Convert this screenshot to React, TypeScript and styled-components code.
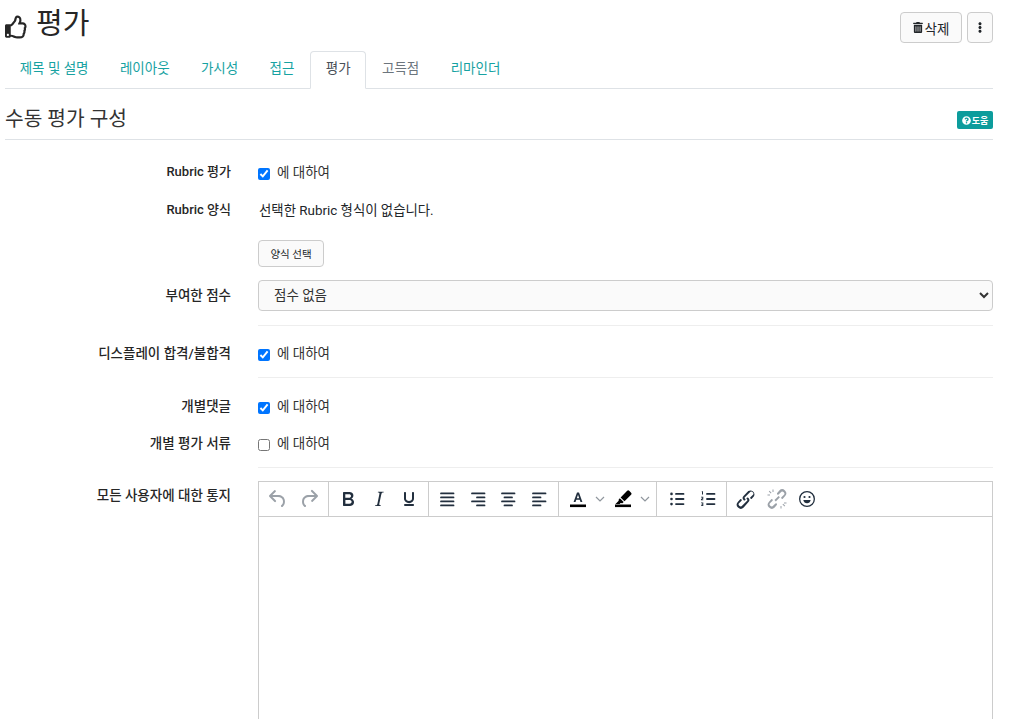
import React from "react";
import styled, { createGlobalStyle } from "styled-components";
import { FaRegThumbsUp, FaTrashAlt, FaEllipsisV, FaQuestionCircle } from "react-icons/fa";

const Global = createGlobalStyle`
  html, body { margin: 0; height: 100%; overflow: hidden; background: #fff; }
  body { font-family: Roboto, "Noto Sans CJK KR", sans-serif; font-size: 13px; color: #212529; }
`;
const Page = styled.div`padding: 0 34px 0 5px; height: 719px; overflow: hidden;`;
const Header = styled.header`display: flex; align-items: center; justify-content: space-between; height: 51px;`;
const Title = styled.h1`display: flex; align-items: center; gap: 8px; margin: 0; font-size: 29px; font-weight: 400; color: #262626; line-height: 51px; position: relative; top: -1px;
  svg { width: 23px; height: 24px; margin-top: 4px; }`;
const Actions = styled.div`display: flex; gap: 5px; margin-top: 4px;`;
const Btn = styled.button`display: inline-flex; align-items: center; justify-content: center; gap: 2px; height: ${p => p.$h || 31}px; width: ${p => p.$w}px; padding: 0; background: #fafafa; border: 1px solid #ccc; border-radius: 4px; color: #212529; font: inherit; font-size: ${p => p.$fs || 13}px;
  svg { width: 10px; height: 11px; }`;
const Tabs = styled.nav`display: flex; height: 37px; border-bottom: 1px solid #dee2e6;`;
const Tab = styled.a`display: flex; align-items: center; height: 38px; box-sizing: border-box; padding: 0 14.7px 7px; font-size: 13.5px; color: ${p => p.$gray ? "#6c757d" : p.$active ? "#495057" : "#17a2a2"}; border: 1px solid ${p => p.$active ? "#dee2e6" : "transparent"}; border-bottom: ${p => p.$active ? "1px solid #fff" : "none"}; border-radius: 4px 4px 0 0; background: ${p => p.$active ? "#fff" : "transparent"};
  &:first-child { margin-left: -1px; }`;
const SectionHead = styled.div`display: flex; align-items: center; justify-content: space-between; box-sizing: content-box; height: 44px; padding-top: 6px; border-bottom: 1px solid #dee2e6;`;
const SectionTitle = styled.h2`margin: 0; font-size: 20.3px; font-weight: 400; color: #333;`;
const Badge = styled.span`display: inline-flex; align-items: center; gap: 1px; height: 18px; width: 36px; justify-content: center; box-sizing: border-box; background: #0c9c9c; color: #fff; font-size: 9px; font-weight: 700; border-radius: 2px; margin-top: 6px;
  svg { width: 9px; height: 9px; }`;
const Form = styled.div`padding-top: 13px;`;
const Row = styled.div`display: grid; grid-template-columns: 226px 1fr; column-gap: 27px; height: ${p => p.$h}px; margin-top: ${p => p.$mt || 0}px; align-items: ${p => p.$top ? "start" : "center"};`;
const Label = styled.label`text-align: right; font-weight: 500; font-size: ${p => p.$fs || 13.5}px; color: #262626; line-height: 18px; padding-top: ${p => p.$top ? 5 : 0}px; margin-top: ${p => p.$up ? -1 : 0}px;`;
const Check = styled.label`display: flex; align-items: center; gap: 7px; font-size: 13.5px; color: #333; input { margin: 3px 0 0; width: 12px; height: 12px; }`;
const CheckText = styled.span`margin-bottom: 2px;`;
const Text = styled.div`font-size: 13.4px; color: #212529; padding-left: 1px; margin-top: -3px;`;
const Select = styled.select`width: 100%; height: 31px; box-sizing: border-box; padding: 0 0 2px 11px; background-color: #fafafa; border: 1px solid #ccc; border-radius: 4px; font: inherit; font-size: 13.5px; color: #333;`;
const Divider = styled.hr`border: 0; border-top: 1px solid #eee; margin: ${p => p.$mt}px 0 0 253px;`;
const Editor = styled.div`border: 1px solid #ccc; height: 500px;`;
const Toolbar = styled.div`display: flex; height: 34px; border-bottom: 1px solid #ccc;`;
const Group = styled.div`display: flex; align-items: center; padding-left: ${p => p.$pl}px; border-right: 1px solid #ccc; width: ${p => p.$w}px; box-sizing: border-box; &:last-child { border-right: 0; }`;
const IconCell = styled.span`display: flex; align-items: center; justify-content: center; width: ${p => p.$w || 30.5}px; flex: none; color: ${p => p.$off ? "rgba(34,47,62,.45)" : "#222f3e"};
  svg { width: 24px; height: 24px; fill: currentColor; display: block; }`;
const Split = styled.span`display: flex; align-items: center; width: 45px; flex: none; padding-left: 3px; box-sizing: border-box; color: #222f3e;
  svg { width: 24px; height: 24px; fill: currentColor; display: block; flex: none; }
  svg + svg { width: 10px; height: 10px; margin-left: 5px; fill: none; stroke: rgba(34,47,62,.5); stroke-width: 1.2; }`;

const Ic = ({ d, children }: { d?: string; children?: React.ReactNode }) => (
  <svg viewBox="0 0 24 24">{d ? <path d={d} /> : null}{children}</svg>
);
const UNDO = "M6.4 8H12c3.7 0 6.2 2 6.8 5.1.6 2.7-.4 5.6-2.3 6.8a1 1 0 0 1-1-1.8c1.1-.7 1.8-2.7 1.4-4.6-.5-2.1-2.1-3.5-4.9-3.5H6.4l3.3 3.3a1 1 0 1 1-1.4 1.4l-5-5a1 1 0 0 1 0-1.4l5-5a1 1 0 0 1 1.4 1.4L6.4 8z";
const REDO = "M17.6 10H12c-2.8 0-4.4 1.4-4.9 3.5-.4 2 .3 4 1.4 4.6a1 1 0 1 1-1 1.8c-2-1.2-2.9-4.1-2.3-6.8.6-3 3-5.1 6.8-5.1h5.6l-3.3-3.3a1 1 0 1 1 1.4-1.4l5 5a1 1 0 0 1 0 1.4l-5 5a1 1 0 0 1-1.4-1.4l3.3-3.3z";
const BOLD = "M7.8 19c-.3 0-.5 0-.6-.2l-.2-.5V5.7c0-.2 0-.4.2-.5l.6-.2h5c1.5 0 2.7.3 3.5 1 .7.6 1.1 1.4 1.1 2.5a3 3 0 0 1-.6 1.9c-.4.6-1 1-1.6 1.2.4.1.9.3 1.3.6s.8.7 1 1.2c.4.4.5 1 .5 1.6 0 1.3-.4 2.3-1.3 3-.8.7-2.1 1-3.8 1H7.8zm5-8.3c.6 0 1.2-.1 1.6-.5.4-.3.6-.7.6-1.3 0-1.1-.8-1.7-2.3-1.7H9.3v3.5h3.4zm.5 6c.7 0 1.3-.1 1.7-.4.4-.4.6-.9.6-1.5s-.2-1-.7-1.4c-.4-.3-1-.4-2-.4H9.4v3.8h4z";
const ITALIC = "M16.7 4.7l-.1.9h-.3c-.6 0-1 0-1.4.3-.3.3-.4.6-.5 1.1l-2.1 9.8v.6c0 .5.4.8 1.4.8h.2l-.2.8H8l.2-.8h.2c1.1 0 1.8-.5 2-1.5l2-9.8.1-.5c0-.6-.4-.8-1.4-.8h-.3l.2-.9h5.8z";
const UNDERLINE = "M16 5c.6 0 1 .4 1 1v5.5a4 4 0 0 1-.4 1.8l-1 1.4a5.3 5.3 0 0 1-5.5 1 5 5 0 0 1-1.6-1c-.5-.4-.8-.9-1.1-1.4a4 4 0 0 1-.4-1.8V6c0-.6.4-1 1-1s1 .4 1 1v5.5c0 .3 0 .6.2 1l.6.7a3.3 3.3 0 0 0 2.2.8 3.4 3.4 0 0 0 2.2-.8c.3-.2.4-.5.6-.8l.2-.9V6c0-.6.4-1 1-1zM8 17h8c.6 0 1 .4 1 1s-.4 1-1 1H8a1 1 0 0 1 0-2z";
const bar = (x: number, y: number, w: number, h = 2) => `M${x + 1} ${y}h${w - 2}a${h / 2} ${h / 2} 0 0 1 0 ${h}H${x + 1}a${h / 2} ${h / 2} 0 0 1 0-${h}z`;
const T = 1.8;
const JUST = bar(5, 5.5, 14.5, T) + bar(5, 9.5, 14.5, T) + bar(5, 13.5, 14.5, T) + bar(5, 17.5, 14.5, T);
const RIGHT = bar(5, 5.5, 14.5, T) + bar(10, 9.5, 9.5, T) + bar(5, 13.5, 14.5, T) + bar(10, 17.5, 9.5, T);
const CENTER = bar(5, 5.5, 14.5, T) + bar(7.5, 9.5, 9.5, T) + bar(5, 13.5, 14.5, T) + bar(7.5, 17.5, 9.5, T);
const LEFT = bar(5, 5.5, 14.5, T) + bar(5, 9.5, 9.5, T) + bar(5, 13.5, 14.5, T) + bar(5, 17.5, 9.5, T);
const LINK = "M6.2 12.3a1 1 0 0 1 1.4 1.4l-2.1 2.1a2 2 0 1 0 2.8 2.8l4.8-4.8a1 1 0 0 0 0-1.4 1 1 0 1 1 1.4-1.3 2.9 2.9 0 0 1 0 4L9.7 20.5A4 4 0 0 1 4 14.8l2.2-2.5zm11.6-.6a1 1 0 0 1-1.4-1.4l2.1-2.1a2 2 0 1 0-2.8-2.8L10.9 10.2a1 1 0 0 0 0 1.4 1 1 0 1 1-1.4 1.3 2.9 2.9 0 0 1 0-4l4.8-4.8A4 4 0 0 1 20 9.2l-2.2 2.5z";
const LIST_BARS = bar(10, 6, 9.5, T) + bar(10, 11.1, 9.5, T) + bar(10, 16.2, 9.5, T);
const Chevron = () => <svg viewBox="0 0 10 10"><path d="M1 3l4 4 4-4" /></svg>;

const Yes = ({ on = true }: { on?: boolean }) => (
  <Check><input type="checkbox" defaultChecked={on} /><CheckText>에 대하여</CheckText></Check>
);

export default function App() {
  return (
    <Page>
      <Global />
      <Header>
        <Title><FaRegThumbsUp />평가</Title>
        <Actions>
          <Btn $w={62} $fs={13.5}><FaTrashAlt />삭제</Btn>
          <Btn $w={26}><FaEllipsisV /></Btn>
        </Actions>
      </Header>
      <Tabs>
        <Tab>제목 및 설명</Tab>
        <Tab>레이아웃</Tab>
        <Tab>가시성</Tab>
        <Tab>접근</Tab>
        <Tab $active>평가</Tab>
        <Tab $gray>고득점</Tab>
        <Tab>리마인더</Tab>
      </Tabs>
      <SectionHead>
        <SectionTitle>수동 평가 구성</SectionTitle>
        <Badge><FaQuestionCircle />도움</Badge>
      </SectionHead>
      <Form>
        <Row $h={38}><Label $fs={13}>Rubric 평가</Label><Yes /></Row>
        <Row $h={38}><Label $fs={13}>Rubric 양식</Label><Text>선택한 Rubric 형식이 없습니다.</Text></Row>
        <Row $h={27} $mt={11}><span /><div><Btn $w={66} $h={27} $fs={10.5}>양식 선택</Btn></div></Row>
        <Row $h={31} $mt={13}>
          <Label $up>부여한 점수</Label>
          <Select defaultValue="none"><option value="none">점수 없음</option></Select>
        </Row>
        <Divider $mt={14} />
        <Row $h={38} $mt={8}><Label>디스플레이 합격/불합격</Label><Yes /></Row>
        <Divider $mt={5} />
        <Row $h={36} $mt={10}><Label>개별댓글</Label><Yes /></Row>
        <Row $h={38}><Label>개별 평가 서류</Label><Yes on={false} /></Row>
        <Divider $mt={5} />
        <Row $h={500} $mt={13} $top>
          <Label $top>모든 사용자에 대한 통지</Label>
          <Editor>
            <Toolbar>
              <Group $pl={3} $w={70}>
                <IconCell $off $w={31}><Ic d={UNDO} /></IconCell>
                <IconCell $off $w={32}><Ic d={REDO} /></IconCell>
              </Group>
              <Group $pl={4} $w={100}>
                <IconCell><Ic d={BOLD} /></IconCell>
                <IconCell><Ic d={ITALIC} /></IconCell>
                <IconCell><Ic d={UNDERLINE} /></IconCell>
              </Group>
              <Group $pl={3} $w={130}>
                <IconCell><Ic d={JUST} /></IconCell>
                <IconCell><Ic d={RIGHT} /></IconCell>
                <IconCell><Ic d={CENTER} /></IconCell>
                <IconCell><Ic d={LEFT} /></IconCell>
              </Group>
              <Group $pl={4} $w={98}>
                <Split>
                  <Ic>
                    <path fill="#000" d="M4 17.5h16v2.6H4z" />
                    <path d="M7.6 15 11 5.5h2L16.4 15h-1.9l-.8-2.3h-3.4L9.5 15H7.6zm3.2-3.8h2.4L12 7.8l-1.2 3.4z" />
                  </Ic>
                  <Chevron />
                </Split>
                <Split>
                  <Ic>
                    <path fill="#000" d="M4 17.5h16v2.6H4z" />
                    <path fill="#000" d="M16.2 3.8a1.4 1.4 0 0 1 2 0l1.9 1.9a1.4 1.4 0 0 1 0 2L13.5 14.3l-3.9-3.9 6.600-6.600zM8.800 11.200l3.900 3.900-1.300 1.100-1.800-.1-.9.800H4.500l3.200-3.200-.1-.9 1.200-1.600z" />
                  </Ic>
                  <Chevron />
                </Split>
              </Group>
              <Group $pl={4.75} $w={70}>
                <IconCell>
                  <Ic>
                    <path d={LIST_BARS} />
                    <circle cx="6.5" cy="6.9" r="1.3" /><circle cx="6.5" cy="12" r="1.3" /><circle cx="6.5" cy="17.1" r="1.3" />
                  </Ic>
                </IconCell>
                <IconCell>
                  <Ic>
                    <path d={LIST_BARS} />
                    <path d="M5.8 4.2H7v3.300H6V5h-.2zM5 9.800h2.300v2l-1.200.7h1.200v.7H5v-1.200l1.300-.8V10.500H5zM5 15.500h2.300v3.500H5v-.7h1.300v-.7H5.400v-.6h.9v-.8H5z" />
                  </Ic>
                </IconCell>
              </Group>
              <Group $pl={3.75} $w={120}>
                <IconCell><Ic d={LINK} /></IconCell>
                <IconCell $off>
                  <Ic>
                    <path d="M6.200 12.300a1 1 0 0 1 1.400 1.400l-2.100 2.100a2 2 0 1 0 2.800 2.800l2.100-2.100a1 1 0 0 1 1.400 1.400l-2.100 2.600A4 4 0 0 1 4 14.800l2.200-2.500zm11.600-.6a1 1 0 0 1-1.400-1.400l2.100-2.100a2 2 0 1 0-2.800-2.800l-2.100 2.100a1 1 0 0 1-1.400-1.400l2.100-2.600A4 4 0 0 1 20 9.200l-2.200 2.500z" />
                    <path d="M9.500 13.100l4.100-4.100 1.300 1.300-4.100 4.100zM19 15.500h2.500v1H19zM2.500 7.500H5v1H2.500zM15.500 19h1v2.500h-1zM7.500 2.500h1V5h-1zM17.500 17.500l.7-.7 2 2-.7.700zM3.800 4.500l.7-.7 2 2-.7.700z" />
                  </Ic>
                </IconCell>
                <IconCell>
                  <Ic>
                    <path fillRule="evenodd" d="M12 4a8 8 0 1 1 0 16 8 8 0 0 1 0-16zm0 1.300a6.700 6.700 0 1 0 0 13.400 6.700 6.700 0 0 0 0-13.400z" />
                    <circle cx="9.500" cy="10" r="1.100" /><circle cx="14.500" cy="10" r="1.100" />
                    <path d="M8.300 13h7.400c-.3 2-1.800 3.300-3.700 3.300S8.600 15 8.300 13z" />
                  </Ic>
                </IconCell>
              </Group>
            </Toolbar>
          </Editor>
        </Row>
      </Form>
    </Page>
  );
}
